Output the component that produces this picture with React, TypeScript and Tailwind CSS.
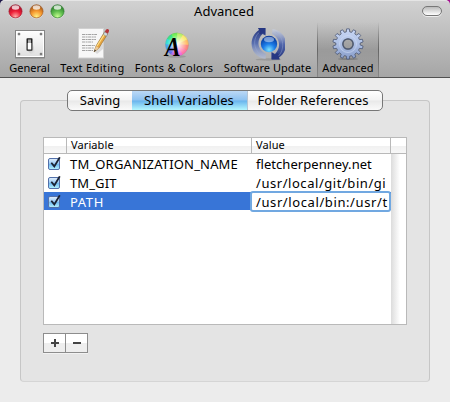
import React from "react";

const gear = (() => {
  const n = 14;
  const pts: string[] = [];
  for (let i = 0; i < n; i++) {
    const a = (i * 2 * Math.PI) / n - Math.PI / 2;
    const s = (2 * Math.PI) / n;
    [[-0.32, 12.2], [-0.2, 15.2], [0.2, 15.2], [0.32, 12.2]].forEach(([o, r]) => {
      pts.push(`${(16 + r * Math.cos(a + o * s)).toFixed(2)},${(16 + r * Math.sin(a + o * s)).toFixed(2)}`);
    });
  }
  return pts.join(" ");
})();

function SwitchIcon() {
  return (
    <svg width="32" height="32" viewBox="0 0 32 32">
      <defs>
        <linearGradient id="plate" x1="0" y1="0" x2="0" y2="1"><stop stopColor="#fff" /><stop offset="1" stopColor="#dedede" /></linearGradient>
        <linearGradient id="shade" x1="0" y1="0" x2="1" y2="1"><stop stopColor="#777" /><stop offset="1" stopColor="#ddd" stopOpacity="0" /></linearGradient>
      </defs>
      <rect x="1" y="29" width="30" height="1.500" fill="#777" opacity=".6" />
      <rect x="1.500" y="2.500" width="29" height="27" fill="url(#plate)" stroke="#858585" />
      <rect x="2.500" y="3.500" width="27" height="25" fill="none" stroke="#fff" />
      {[[5, 6], [27, 6], [5, 26], [27, 26]].map(([x, y]) => (
        <g key={`${x}-${y}`}><circle cx={x} cy={y} r="1.500" fill="#aaa" /><circle cx={x} cy={y} r=".8" fill="#444" /></g>
      ))}
      <path d="M13 22h6v-5l2 8-4 1z" fill="url(#shade)" />
      <rect x="12.500" y="10.200" width="6" height="12.500" rx=".8" fill="#222" />
      <rect x="14" y="11.500" width="3" height="4" fill="#aaa" />
      <rect x="13.700" y="15" width="3.600" height="6.500" fill="#fff" />
    </svg>
  );
}

function TextIcon() {
  return (
    <svg width="32" height="32" viewBox="0 0 32 32">
      <rect x="1" y="1" width="26" height="30" fill="#aaa" opacity=".6" />
      <rect x="1.500" y=".5" width="25" height="29.500" fill="#f7f7f7" stroke="#d0d0d0" />
      <path d="M5 6.500h15M5 9h14M5 11.500h14M5 14h11M5 17.500h13M5 20h12M5 22.500h11" stroke="#999" strokeWidth=".9" strokeDasharray="3 .6 2 .5" />
      <path d="M18 24l8-9v6l-6 5z" fill="#999" opacity=".3" />
      <path d="M17 24l2-6 8.500-14 3 2-8.500 14z" fill="#e6a440" stroke="#8b6529" strokeWidth=".6" />
      <path d="M20 18L28 5.500" stroke="#ffe287" strokeWidth="1.200" />
      <path d="M17 24l2-6 3 2z" fill="#ebc99a" /><path d="M17 24l.8-2.400 1.200.8z" fill="#222" />
      <path d="M26.300 6.300l1.500-2.500 3 2-1.500 2.500z" fill="#d0dadf" stroke="#66777d" strokeWidth=".4" />
      <path d="M27.800 3.800L28.800 2q1.500-2 3.200 0q.4.900-1.200 3.800z" fill="#b4373a" />
    </svg>
  );
}

function FontsIcon() {
  const colors = ["#ffbf69", "#ff8780", "#ff78a8", "#f569da", "#b86cec", "#6470ed", "#46a8f0", "#36e0d5", "#3be486", "#72ef56", "#bbf169", "#fae972"];
  return (
    <svg width="32" height="32" viewBox="0 0 32 32">
      <defs><radialGradient id="white"><stop stopColor="#fff" /><stop offset="1" stopColor="#fff" stopOpacity="0" /></radialGradient></defs>
      <ellipse cx="18" cy="28.500" rx="10" ry="1.300" fill="#777" opacity=".4" />
      {colors.map((c, i) => {
        const a = (i * Math.PI) / 6 - 0.5, b = a + Math.PI / 6 + 0.04;
        return <path key={c} fill={c} d={`M19 16.500L${19 + 11.700 * Math.cos(a)} ${16.500 + 11.700 * Math.sin(a)}A11.700 11.700 0 0 1 ${19 + 11.700 * Math.cos(b)} ${16.500 + 11.700 * Math.sin(b)}z`} />;
      })}
      <circle cx="19" cy="16.500" r="10" fill="url(#white)" />
      <circle cx="19" cy="16.500" r="11.500" fill="none" stroke="#777" strokeOpacity=".35" strokeWidth=".6" />
      <text x="7" y="27.500" fontFamily="Liberation Serif, serif" fontStyle="italic" fontWeight="bold" fontSize="28" textLength="15.500" lengthAdjust="spacingAndGlyphs">A</text>
    </svg>
  );
}

function UpdateIcon() {
  return (
    <svg width="34" height="34" viewBox="2.500 3 34 34">
      <defs>
        <radialGradient id="orb" cx=".5" cy=".85" r=".8"><stop stopColor="#7de4ff" /><stop offset=".45" stopColor="#1c7de8" /><stop offset="1" stopColor="#06369a" /></radialGradient>
        <linearGradient id="arcLeft" x1="0" y1="0" x2="0" y2="1"><stop stopColor="#25357c" /><stop offset=".5" stopColor="#5a70b0" /><stop offset="1" stopColor="#b8c3dd" stopOpacity=".6" /></linearGradient>
        <linearGradient id="arcRight" x1="0" y1="1" x2="0" y2="0"><stop stopColor="#25357c" /><stop offset=".5" stopColor="#5065aa" /><stop offset="1" stopColor="#cbd2e3" stopOpacity=".7" /></linearGradient>
      </defs>
      <ellipse cx="20" cy="35.500" rx="13" ry="1.200" fill="#777" opacity=".4" />
      <path d="M17 35C0 32 -.5 13 10.500 6L9.500 4H17v7.500L14 10C7.500 16.500 9 26 17.500 30z" fill="url(#arcLeft)" />
      <path d="M10 4.300h6.700v6.500L14.500 9 12 10.500 10 8.500l1.500-2z" fill="#263783" />
      <path d="M24 5C40.500 8 41 27 30.500 33.500l1 2H23V28l3.500 2C33 24 31.500 13.500 23.500 10z" fill="url(#arcRight)" />
      <path d="M30.500 35.200H23.300v-6.500l3 2 2.500-2 2 2.500-1 2z" fill="#263783" />
      <path d="M15 32C4 27 4 14 11 8" fill="none" stroke="#9bacd5" strokeWidth=".6" opacity=".7" />
      <path d="M27 8c9 5 9 18 3 24" fill="none" stroke="#9bacd5" strokeWidth=".6" opacity=".7" />
      <circle cx="20.500" cy="20" r="8.200" fill="url(#orb)" /><ellipse cx="20.500" cy="15.500" rx="5" ry="2.800" fill="#fff" opacity=".45" />
    </svg>
  );
}

function GearIcon() {
  return (
    <svg width="32" height="32" viewBox="0 0 32 32">
      <defs><linearGradient id="gear" x1="0" y1="0" x2="0" y2="1"><stop stopColor="#c9d7f5" /><stop offset=".5" stopColor="#aec0e5" /><stop offset="1" stopColor="#869bc8" /></linearGradient></defs>
      <ellipse cx="16" cy="31" rx="10" ry="1" fill="#555" opacity=".4" />
      <path fillRule="evenodd" d={`M${gear}zM21 16a5 5 0 1 0-10 0a5 5 0 1 0 10 0z`} fill="url(#gear)" stroke="#4c5874" strokeWidth=".8" />
      <circle cx="16" cy="16" r="8.500" fill="none" stroke="#d0dcf5" strokeWidth=".6" />
      <circle cx="16" cy="16" r="5.200" fill="none" stroke="#4e586c" strokeWidth="1.300" />
    </svg>
  );
}

function Light({ id, dark, mid, glow }: { id: string; dark: string; mid: string; glow: string }) {
  return (
    <svg width="15" height="15" viewBox="0 0 15 15">
      <defs><radialGradient id={id} cx=".5" cy=".9" r=".85"><stop stopColor={glow} /><stop offset=".5" stopColor={mid} /><stop offset="1" stopColor={dark} /></radialGradient></defs>
      <circle cx="7.500" cy="8" r="7" fill="#eee" opacity=".5" /><circle cx="7.500" cy="7.300" r="6.600" fill={`url(#${id})`} stroke={dark} strokeWidth=".6" />
      <ellipse cx="7.500" cy="3.500" rx="3.700" ry="2.200" fill="#fff" opacity=".75" />
    </svg>
  );
}

function Check() {
  return (
    <svg width="15" height="15" viewBox="0 0 15 15">
      <defs><linearGradient id="check" x1="0" y1="0" x2="0" y2="1"><stop stopColor="#e5f0fc" /><stop offset=".45" stopColor="#9dccf5" /><stop offset=".5" stopColor="#6cb5ef" /><stop offset="1" stopColor="#b8f5ff" /></linearGradient></defs>
      <rect x="1.500" y="1.500" width="11" height="11" rx="1.500" fill="url(#check)" stroke="#5370aa" />
      <path d="M4.300 5.700l3 3.700L12.800.3" fill="none" stroke="#1b2232" strokeWidth="1.800" />
    </svg>
  );
}

const rows = [
  ["TM_ORGANIZATION_NAME", "fletcherpenney.net", "tracking-[0.17px]", "tracking-[0.05px]"],
  ["TM_GIT", "/usr/local/git/bin/gi", "tracking-[0.1px]", "tracking-[0.55px]"],
  ["PATH", "/usr/local/bin:/usr/t", "tracking-[0.6px]", "tracking-[0.6px]"],
];

export default function App() {
  return (
    <div className="flex h-[402px] w-[450px] flex-col overflow-hidden bg-[#ececec] font-['Noto_Sans',sans-serif] text-[13px] text-black">
      <div className="shrink-0 bg-[linear-gradient(90deg,#1d1747_50%,#a3108f_50%)]">
        <header className="h-[78px] rounded-t-[5px] border-b border-[#515151] bg-linear-to-b from-[#d2d2d2] to-[#a6a6a6]">
          <div className="flex h-[22px] items-center rounded-t-[5px] border-t border-[#e5e5e5]">
            <div className="flex w-[150px] gap-[6px] pl-[7.500px]">
              <Light id="red" dark="#991329" mid="#ed1d36" glow="#ffafa8" />
              <Light id="amber" dark="#9b5219" mid="#f6972d" glow="#fff183" />
              <Light id="green" dark="#28772a" mid="#5dbb4c" glow="#c6ff91" />
            </div>
            <div className="w-[148px] pb-[2px] text-center leading-[18px]">Advanced</div>
            <div className="mb-[2px] ml-auto mr-[8px] h-[10px] w-[20px] rounded-full border border-[#777] bg-linear-to-b from-[#bbb] to-white shadow-[0_1px_0_#eee]" />
          </div>
          <nav className="flex h-[55px] text-[11px] leading-[14px]">
            <div className="ml-[4px] flex w-[51px] flex-col items-center pt-[6px]"><SwitchIcon /><span className="mt-px whitespace-nowrap">General</span></div>
            <div className="flex w-[75px] flex-col items-center pt-[6px]"><TextIcon /><span className="mt-px whitespace-nowrap tracking-[0.35px]">Text Editing</span></div>
            <div className="flex w-[88px] flex-col items-center pt-[6px]"><FontsIcon /><span className="mt-px whitespace-nowrap tracking-[0.25px]">Fonts &amp; Colors</span></div>
            <div className="flex w-[99px] flex-col items-center pt-[5px]"><UpdateIcon /><span className="whitespace-nowrap tracking-[0.05px]">Software Update</span></div>
            <div className="flex w-[62px] bg-linear-to-b from-transparent via-black/15 to-black/5">
              <div className="w-px bg-linear-to-b from-transparent via-[#666] to-[#888]" />
              <div className="flex flex-1 flex-col items-center pt-[6px]"><GearIcon /><span className="mt-px whitespace-nowrap tracking-[0.1px]">Advanced</span></div>
              <div className="w-px bg-linear-to-b from-transparent via-[#666] to-[#888]" />
            </div>
          </nav>
        </header>
      </div>
      <main className="flex flex-col px-[20px] pt-[12px]">
        <div className="z-10 ml-[47px] flex h-[21px] w-[316px] overflow-hidden rounded-[5px] border border-[#777] bg-[linear-gradient(#fff,#f3f3f3_48%,#e9e9e9_52%,#fafafa)] text-center leading-[18px]">
          <div className="w-[64px]">Saving</div>
          <div className="-mt-px w-[115px] border-t border-[#3a32a8] bg-[linear-gradient(#bcd8f5,#8dc2f1_48%,#69b4ed_52%,#b5f8ff)] pr-px tracking-[0.1px]">Shell Variables</div>
          <div className="w-[135px] border-l border-[#b5c5d5] pr-[4px] tracking-[0.1px]">Folder References</div>
        </div>
        <section className="-mt-[11px] h-[282px] w-[410px] rounded-[4px] border border-[#c6c6c6] border-b-[#d5d5d5] bg-[#e4e4e4] pl-[22px] pt-[36px]">
          <div className="flex h-[188px] w-[364px] flex-col border border-[#b9b9b9] bg-white">
            <div className="flex h-[16px] shrink-0 border-b border-[#b9b9b9] bg-[linear-gradient(#fff_50%,#f0f0f0_50%,#f8f8f8)] text-[11px] leading-[14px] tracking-[0.1px]">
              <div className="w-[23px] border-r border-[#b9b9b9]" />
              <div className="w-[185px] border-r border-[#b9b9b9] pl-[4px]">Variable</div>
              <div className="w-[139px] border-r border-[#b9b9b9] pl-[4px]">Value</div>
            </div>
            <div className="flex flex-1">
              <div className="w-[347px]">
                {rows.map(([name, value, tracking, valueTracking], i) => (
                  <div key={name} className={`flex h-[19px] border-b border-white leading-[20px] ${i === 2 ? "bg-[#3875d7] text-white" : ""}`}>
                    <div className="w-[26px] pl-[3px] pt-[3px]"><Check /></div>
                    <div className={`w-[180px] whitespace-nowrap ${tracking}`}>{name}</div>
                    <div className={`w-[141px] whitespace-nowrap ${valueTracking} ${i === 2 ? "-mt-px h-[21px] rounded-[3px] border-2 border-[#71a8e1] bg-white pl-[4px] leading-[18px] text-black" : "h-[19px] pl-[6px]"}`}>{value}</div>
                  </div>
                ))}
              </div>
              <div className="flex-1 bg-[linear-gradient(90deg,#dcdcdc,#fff_60%)]" />
            </div>
          </div>
          <div className="mt-[8px] flex h-[20px] w-[45px] border border-[#8d8d8d] bg-[linear-gradient(#fff_50%,#eee_50%)] shadow-[0_1px_0_#f2f2f2]">
            <div className="flex w-[22px] items-center justify-center border-r border-[#8d8d8d]"><svg width="8" height="8"><path d="M0 4h8M4 0v8" stroke="#444" strokeWidth="2" /></svg></div>
            <div className="flex w-[21px] items-center justify-center"><svg width="8" height="8"><path d="M0 4h8" stroke="#444" strokeWidth="2" /></svg></div>
          </div>
        </section>
      </main>
    </div>
  );
}
